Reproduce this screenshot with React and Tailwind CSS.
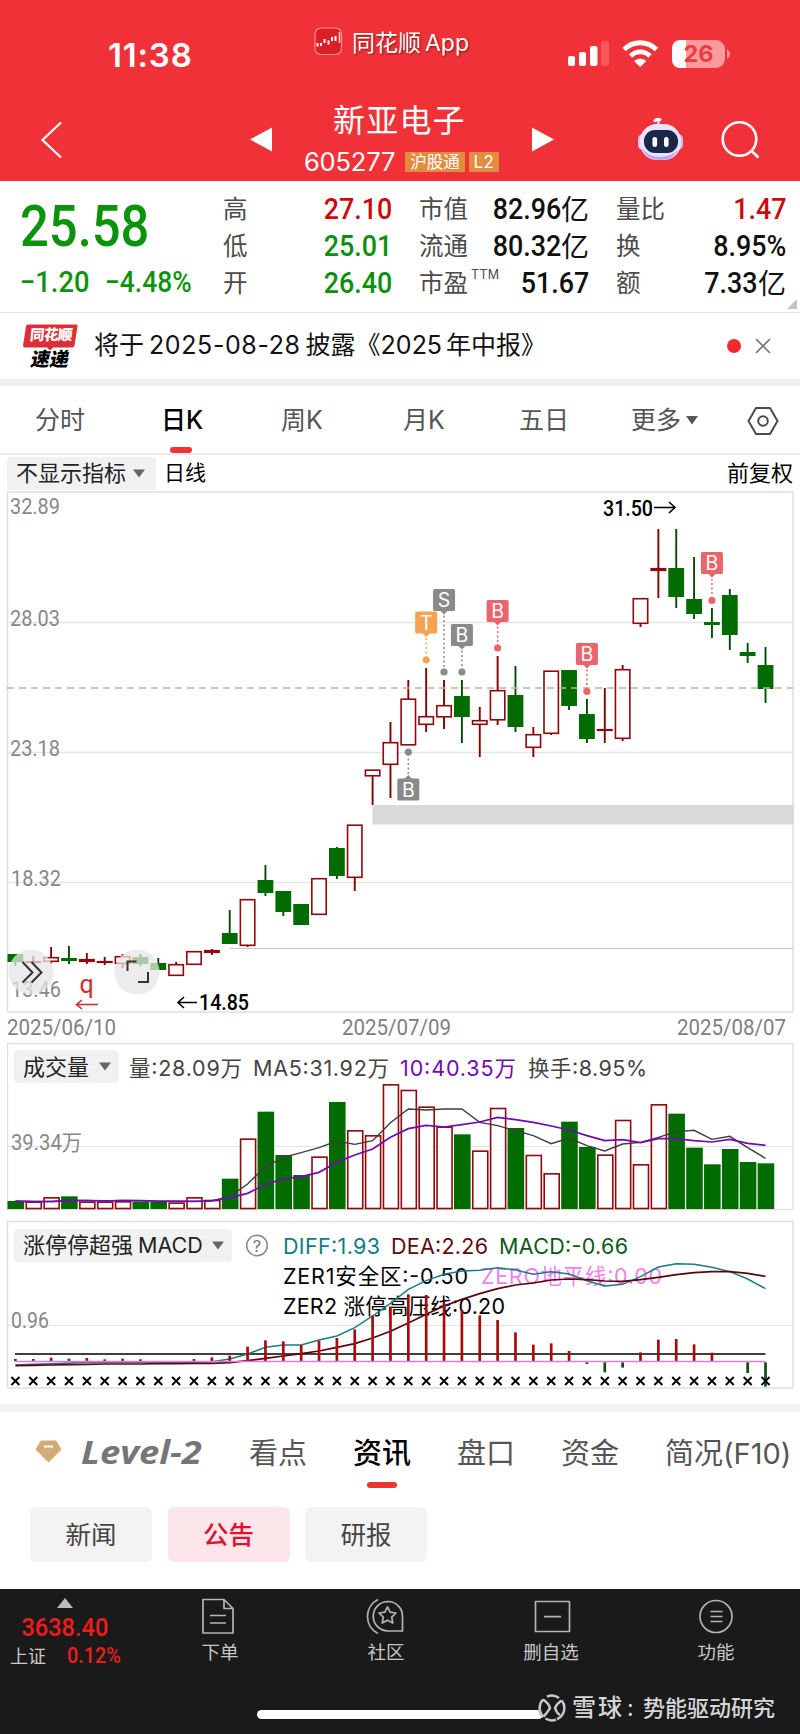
import React from 'react';

const GREEN = '#006c00';
const RED = '#93060b';
const STEP = 17.86;
const cx = (i) => 15.4 + i * STEP;

// [up, bodyTop, bodyBottom, high, low]
const candles = [
  [0, 954, 962, 954, 966], [1, 961, 963, 956, 964], [1, 957, 962, 947, 964], [0, 958, 961, 946, 964],
  [1, 959, 962, 953, 964], [1, 961, 963, 957, 965], [1, 956, 964, 954, 968], [0, 957, 964, 954, 966],
  [0, 963, 970, 958, 970], [1, 964, 976, 962, 976], [1, 951, 965, 951, 965], [1, 950, 953, 949, 955],
  [0, 933, 944, 910, 944], [1, 899, 946, 899, 947], [0, 880, 893, 865, 896], [0, 891, 912, 891, 916],
  [0, 904, 925, 904, 925], [1, 878, 915, 878, 915], [0, 848, 876, 847, 879], [1, 824.5, 878, 825, 891],
  [1, 769.5, 776.5, 770, 805], [1, 742, 765, 722, 798], [1, 698.5, 745.5, 680, 745], [1, 716, 725, 668, 732],
  [1, 705, 717.5, 680, 729], [0, 696, 717, 680, 743], [1, 720, 725, 707, 757], [1, 690, 720.5, 656, 725],
  [0, 695, 727, 666, 732], [1, 734, 748, 727, 757], [1, 670.5, 734, 671, 735], [0, 670, 706, 670, 710],
  [0, 714, 739, 699, 743], [1, 729, 731, 688, 743], [1, 669, 739, 665, 741], [1, 598, 624, 598, 627],
  [1, 568, 571, 529, 598], [0, 568, 597, 529, 608], [0, 599, 614, 557, 619], [0, 622, 625, 608, 638],
  [0, 595, 635, 589, 650], [0, 652, 656, 643, 663], [0, 665, 689, 647, 703],
];

const markers = [
  { i: 23, t: 'T', box: 611.5, dot: 660, c: '#f7a253' },
  { i: 24, t: 'S', box: 589, dot: 672, c: '#8a8a8a' },
  { i: 25, t: 'B', box: 624, dot: 672, c: '#8a8a8a' },
  { i: 27, t: 'B', box: 600, dot: 648, c: '#e9656b' },
  { i: 32, t: 'B', box: 643, dot: 691.5, c: '#e9656b' },
  { i: 39, t: 'B', box: 552, dot: 600.5, c: '#e9656b' },
  { i: 22, t: 'B', box: 778.5, dot: 752, c: '#8a8a8a' },
];

const volumes = [
  483, 485, 472, 469, 485, 485, 484, 485, 486, 488, 472, 480, 416, 296, 215, 345, 405, 350, 186, 271, 286, 133,
  150, 200, 260, 283, 332, 204, 264, 345, 400, 245, 321, 344, 240, 373, 193, 221, 323, 373, 327, 366, 370,
];
const ma5 = [
  483, 484, 484, 481, 481, 482, 482, 482, 484, 485, 484, 482, 470, 432, 380, 352, 338, 323, 303, 313, 302, 248,
  207, 210, 207, 207, 247, 257, 272, 287, 311, 294, 317, 333, 312, 307, 292, 275, 271, 298, 289, 323, 355,
];
const ma10 = [
  484, 485, 485, 482, 482, 483, 481, 482, 483, 483, 484, 483, 473, 460, 433, 417, 410, 397, 367, 345, 327, 292,
  266, 256, 261, 254, 246, 232, 239, 247, 258, 270, 287, 302, 299, 308, 296, 296, 302, 306, 298, 310, 316,
];
const diff = [
  975, 973, 971, 969, 967, 967, 967, 967, 967, 967, 967, 965, 957, 942, 922, 915, 915, 900, 888, 863, 828, 790,
  748, 722, 703, 693, 691, 683, 690, 703, 695, 702, 722, 738, 733, 710, 681, 671, 673, 682, 695, 717, 746,
];
const dea = [
  977, 976, 975, 974, 973, 972, 972, 972, 971, 971, 970, 970, 968, 962, 955, 948, 941, 933, 922, 911, 894, 874,
  849, 823, 798, 778, 761, 746, 735, 729, 720, 717, 719, 723, 724, 719, 712, 704, 698, 695, 695, 700, 709,
];
const macd = [
  957, 957, 953, 956, 954, 958, 956, 958, 964, 964, 957, 952, 947, 920, 901, 904, 915, 902, 894, 868, 827, 800,
  763, 765, 790, 810, 826, 840, 877, 914, 910, 933, 972, 997, 983, 937, 899, 897, 913, 938, 964, 999, 1040,
];

const toPoints = (list) => list.map((v, i) => `${cx(i)},${v / 3}`).join(' ');

const Label = ({ x, y, w, size = 21.5, fill = '#000', din, children }) => (
  <text
    x={x}
    y={y}
    textLength={w}
    lengthAdjust={din ? 'spacingAndGlyphs' : 'spacing'}
    fontSize={size}
    fill={fill}
    className={din ? "font-['Roboto','Noto_Sans_CJK_SC',sans-serif]" : undefined}
  >
    {children}
  </text>
);

const Pill = ({ className, children }) => (
  <div className={`flex items-center justify-between rounded bg-[#f1f1f1] text-[22px] leading-none text-[#222] ${className}`}>
    <span className="whitespace-nowrap">{children}</span>
    <svg width="12" height="9" viewBox="0 0 12 9"><path d="M0 0.5h12L6 8.5z" fill="#666" /></svg>
  </div>
);

const StatusBar = () => (
  <div className="relative flex h-[90px] text-white">
    <div className="w-[206px] pl-[108px] pt-[34px] font-['Inter'] text-[33px] font-semibold leading-[42px] tracking-[0.8px]">11:38</div>
    <div className="flex h-[56px] items-end pl-[108px]">
      <svg width="29" height="29" viewBox="0 0 29 29">
        <rect x="1" y="1" width="26.500" height="26.500" rx="6" fill="#dc2027" stroke="#fb8f90" strokeWidth="1.2" />
        <path d="M3.500 16v3.500M7 16v3M10.500 12v4M14.500 13.500v4M18 10v4M21.500 9v5" stroke="#fff" strokeWidth="2" />
        <path d="M25.500 5v11" stroke="#ffc9c9" strokeWidth="1.6" />
      </svg>
    </div>
    <div className="whitespace-nowrap pl-[9px] pt-[28px] text-[23px] leading-[30px] [text-shadow:1px_1px_2px_#7a1a1a]">同花顺<span className="ml-[4px] font-['Inter']">App</span></div>
    <svg className="absolute left-[566px] top-[38px]" width="168" height="32" viewBox="0 0 168 32">
      <rect x="2" y="18" width="7" height="10" rx="2" fill="#fff" />
      <rect x="13" y="14" width="7" height="14" rx="2" fill="#fff" />
      <rect x="24" y="8" width="7.500" height="20" rx="2" fill="#fff" />
      <rect x="35" y="3" width="8" height="25" rx="2" fill="#f5575a" />
      <g fill="none" stroke="#fff" strokeWidth="5">
        <path d="M58 11.500C67 2.500 81 2.500 90.500 11.500" />
        <path d="M64.500 18C70 12.500 78.500 12.500 84 18" strokeWidth="4.600" />
      </g>
      <path d="M68 23q6.200-5 12.400 0L74.200 29z" fill="#fff" />
      <rect x="106" y="2" width="53" height="28" rx="9" fill="#f99a9d" />
      <path d="M120 2h-5q-9 0-9 9v10q0 9 9 9h5z" fill="#fff" />
      <path d="M161 11q6 5 0 10z" fill="#f99a9d" />
      <text x="132.500" y="24" textAnchor="middle" fontSize="23.5" fontWeight="700" fill="#ef3a40" className="font-['Inter']">26</text>
    </svg>
  </div>
);

const NavBar = () => (
  <div className="relative flex h-[91px] text-white">
    <svg className="ml-[40px] mt-[31px]" width="23" height="38" viewBox="0 0 23 38"><path d="M21 1.500L2.500 19L21 36.500" fill="none" stroke="#fff" strokeWidth="2.200" /></svg>
    <svg className="ml-[187px] mt-[37px]" width="22" height="25" viewBox="0 0 22 25"><path d="M0 12.500L22 0.500v24z" fill="#fff" /></svg>
    <div className="ml-[30px] w-[200px] pt-[10px]">
      <h1 className="pl-[31px] text-[32px] leading-[42px] tracking-[1.2px]">新亚电子</h1>
      <div className="flex items-center pt-[9px] leading-[20px]">
        <span className="w-[98px] pl-[2px] pt-[1px] font-['Inter'] text-[25.5px] leading-[20px] tracking-[-0.2px]">605277</span>
        <span className="ml-[5px] flex h-[20px] w-[60px] items-center justify-center bg-[#e28c40] text-[16.5px]">沪股通</span>
        <span className="ml-[4px] flex h-[20px] w-[30px] items-center justify-center bg-[#e28c40] font-['Inter'] text-[17px] tracking-wide">L2</span>
      </div>
    </div>
    <svg className="ml-[30px] mt-[37px]" width="22" height="25" viewBox="0 0 22 25"><path d="M22 12.500L0 0.500v24z" fill="#fff" /></svg>
    <svg className="absolute left-[637px] top-[27px]" width="48" height="44" viewBox="0 0 48 44">
      <path d="M21 8q2-5-3-5" fill="none" stroke="#ddd5ff" strokeWidth="2.400" />
      <path d="M17 4.500q4-4 7-1" fill="none" stroke="#fff" strokeWidth="3" />
      <rect x="1" y="17" width="10" height="16" rx="5" fill="#d6ccfa" />
      <rect x="36" y="17" width="10" height="16" rx="5" fill="#c8bcf6" />
      <rect x="3" y="7" width="41" height="36" rx="17" fill="#e8e3ff" />
      <path d="M5 31q5 12 18 12t18-10q-7 7-18 7T5 31" fill="#b9a7f3" />
      <rect x="7" y="13" width="34" height="23" rx="11" fill="#1a2747" />
      <rect x="15.500" y="20" width="4.600" height="10" rx="2.200" fill="#fff" />
      <rect x="27" y="20" width="4.600" height="10" rx="2.200" fill="#fff" />
    </svg>
    <svg className="absolute left-[720px] top-[29px]" width="42" height="42" viewBox="0 0 42 42" fill="none" stroke="#fff" strokeWidth="2.600">
      <circle cx="19.500" cy="20" r="16.800" /><path d="M30.500 31l8 7.500" />
    </svg>
  </div>
);

const Stat = ({ label, sup, value, unit, className = 'text-[#111]' }) => (
  <div className="flex h-[37px] items-center justify-between">
    <span className="text-[24.5px] text-[#4c4c4c]">
      {label}
      {sup && <sup className="ml-[3px] -top-[13px] font-['Inter'] text-[12.5px] tracking-wide">{sup}</sup>}
    </span>
    <span className={`flex items-center whitespace-nowrap text-[28px] ${className}`}>
      <span className="origin-right scale-x-[0.91] font-['Roboto'] text-[29.5px] font-medium">{value}</span>
      {unit && <span className="leading-none">{unit}</span>}
    </span>
  </div>
);

const Quote = () => (
  <section className="relative flex h-[132px] border-b border-[#e3e3e3] bg-white pt-[10px]">
    <div className="w-[223px] pl-[20px] font-['Roboto'] text-[#0b940b]">
      <div className="origin-left scale-x-[0.89] pt-[7px] text-[57px] font-medium leading-[58px]">25.58</div>
      <div className="flex pt-[8px] text-[29px] leading-[36px] font-medium">
        <span className="w-[85px] origin-left scale-x-[0.94]">−1.20</span>
        <span className="origin-left scale-x-[0.91] whitespace-nowrap">−4.48%</span>
      </div>
    </div>
    <div className="w-[169px]">
      <Stat label="高" value="27.10" className="text-[#cc0a0a]" />
      <Stat label="低" value="25.01" className="text-[#0b900b]" />
      <Stat label="开" value="26.40" className="text-[#0b900b]" />
    </div>
    <div className="ml-[27px] w-[170px]">
      <Stat label="市值" value="82.96" unit="亿" />
      <Stat label="流通" value="80.32" unit="亿" />
      <Stat label="市盈" sup="TTM" value="51.67" />
    </div>
    <div className="ml-[27px] w-[170px]">
      <Stat label="量比" value="1.47" className="text-[#cc0a0a]" />
      <Stat label="换" value="8.95%" />
      <Stat label="额" value="7.33" unit="亿" />
    </div>
    <svg className="absolute bottom-[3px] right-[3px]" width="10" height="10"><path d="M10 0v10H0z" fill="#c4c4c4" /></svg>
  </section>
);

const NewsBanner = () => (
  <section className="flex h-[73px] items-center border-b-[7px] border-[#f0f0f0] bg-white">
    <div className="ml-[23px] w-[55px] text-center font-black leading-none">
      <div className="relative flex h-[24px] items-center justify-center">
        <svg className="absolute inset-0" width="55" height="26" viewBox="0 0 55 26"><path d="M5 0.500h48q2 0 1.500 2l-3 19q-.4 2-2 2H30l-3 3-3-3H2q-2 0-2-2L3 2.500q.4-2 2-2z" fill="#dd2f36" /></svg>
        <span className="relative -skew-x-6 text-[14.5px] tracking-[-0.5px] text-white">同花顺</span>
      </div>
      <div className="pt-[3px] text-[19px] leading-[18px] text-black"><span className="inline-block -skew-x-12">速递</span></div>
    </div>
    <p className="ml-[16px] flex-1 whitespace-nowrap text-[25px] text-[#111]">
      将于<span className="ml-[5px] mr-[5px] font-['Inter'] tracking-[0.6px]">2025-08-28</span>披露《<span className="mr-[4px] font-['Inter']">2025</span>年中报》
    </p>
    <span className="size-[14px] rounded-full bg-[#ef2a30]" />
    <svg className="ml-[14px] mr-[29px]" width="16" height="16" viewBox="0 0 16 16"><path d="M1 1l14 14M15 1L1 15" stroke="#777" strokeWidth="1.700" /></svg>
  </section>
);

const PeriodTabs = () => (
  <nav className="relative flex h-[69px] items-center border-b-2 border-[#ececec] bg-white pt-[2px] text-[25px] text-[#555] whitespace-nowrap">
    <span className="ml-[35px] w-[126px]">分时</span>
    <span className="w-[120px] font-medium text-black">日<span className="font-['Inter']">K</span></span>
    <span className="w-[122px]">周<span className="font-['Inter']">K</span></span>
    <span className="w-[116px]">月<span className="font-['Inter']">K</span></span>
    <span className="w-[112px]">五日</span>
    <span className="flex w-[116px] items-center gap-[5px]">更多<svg width="12" height="9" viewBox="0 0 12 9"><path d="M0 0h12L6 8.500z" fill="#555" /></svg></span>
    <svg width="32" height="30" viewBox="0 0 32 30" fill="none" stroke="#4a4a4a" strokeWidth="2">
      <path d="M9 2h14l7.500 13L23 28H9L1.500 15z" strokeLinejoin="round" /><circle cx="16" cy="15" r="4.800" />
    </svg>
    <span className="absolute left-[170px] bottom-[0px] h-[6px] w-[22px] rounded-full bg-[#ee3434]" />
  </nav>
);

const KChart = () => (
  <section className="bg-white">
    <div className="flex h-[36px] items-center pl-[7px] pr-[7px] text-[22px] text-black">
      <Pill className="h-[33px] w-[149px] pl-[9px] pr-[11px]">不显示指标</Pill>
      <span className="ml-[8px] text-[21px]">日线</span>
      <span className="ml-auto">前复权</span>
    </div>
    <svg className="block" width="800" height="552" viewBox="0 491 800 552">
      <rect x="7.500" y="492" width="785.500" height="520" fill="none" stroke="#dedede" strokeWidth="1.500" />
      <path d="M7 622.500H793M7 752.500H793M7 882.500H793" stroke="#e6e6e6" strokeWidth="1.300" />
      <path d="M230 948.500H793" stroke="#c9c9c9" strokeWidth="1.200" />
      <rect x="372.500" y="805" width="421" height="19.500" fill="#d9d9d9" />
      <g fill="#888">
        <Label x="10" y="514" w="50" size="22" fill="#888" din>32.89</Label>
        <Label x="10" y="625.5" w="50" size="22" fill="#888" din>28.03</Label>
        <Label x="10" y="755.5" w="50" size="22" fill="#888" din>23.18</Label>
        <Label x="11" y="885.5" w="50" size="22" fill="#888" din>18.32</Label>
        <Label x="11" y="997" w="50" size="22" fill="#888" din>13.46</Label>
      </g>
      {candles.map(([up, top, bottom, high, low], i) => (
        <g key={i}>
          <path d={`M${cx(i)} ${high}V${low}`} stroke={up ? '#850000' : '#004d00'} strokeWidth="1.900" />
          {up ? (
            <rect x={cx(i) - 7.200} y={top + 0.7} width="14.400" height={Math.max(bottom - top - 1.4, 0.6)} fill="#fff" stroke={RED} strokeWidth="1.600" />
          ) : (
            <rect x={cx(i) - 7.900} y={top} width="15.800" height={bottom - top} fill={GREEN} />
          )}
        </g>
      ))}
      <path d="M7 688H793" stroke="#b3bb9c" strokeWidth="1.300" strokeDasharray="7 5" />
      {markers.map(({ i, t, box, dot, c }) => (
        <g key={i} fill={c}>
          <path d={`M${cx(i)} ${dot > box ? box + 22 : box}V${dot}`} stroke={c} strokeWidth="1.500" strokeDasharray="2 2.500" />
          <circle cx={cx(i)} cy={dot} r="3.600" />
          <rect x={cx(i) - 11} y={box} width="22" height="22" rx="1.500" />
          <path d={dot > box ? `M${cx(i) - 4} ${box + 21.5}h8l-4 4z` : `M${cx(i) - 4} ${box + 0.5}h8l-4 -4z`} />
          <text x={cx(i)} y={box + 18} textAnchor="middle" fontSize="19.500" fill="#fff" className="font-['Inter']">{t}</text>
        </g>
      ))}
      <Label x="603" y="515.500" w="50" size="22" din><tspan fontWeight="500">31.50</tspan></Label>
      <path d="M654 507.500H675M669 502l6 5.500-6 5.500" fill="none" stroke="#000" strokeWidth="1.600" />
      <Label x="199" y="1010" w="50" size="22" din><tspan fontWeight="500">14.85</tspan></Label>
      <path d="M197 1002.500H178M184 997l-6 5.500 6 5.500" fill="none" stroke="#000" strokeWidth="1.600" />
      <g fillOpacity="0.75" fill="#e6e6e6"><circle cx="31" cy="972" r="22.500" /><circle cx="137" cy="972" r="22.500" /></g>
      <path d="M22.500 962l10 10.500-10 10M31.500 962l10 10.500-10 10" fill="none" stroke="#333" strokeWidth="2" />
      <path d="M127.500 971v-9.500h9M138 982h10v-10" fill="none" stroke="#333" strokeWidth="2" />
      <text x="79.500" y="992.500" fontSize="25" fill="#d42a2f" className="font-['Roboto']">q</text>
      <path d="M98 1004.500H77M82 1000l-5.500 4.500 5.500 4.500" fill="none" stroke="#d42a2f" strokeWidth="1.600" />
      <Label x="7" y="1034.500" w="109" size="22" fill="#808080" din>2025/06/10</Label>
      <Label x="342" y="1034.500" w="109" size="22" fill="#808080" din>2025/07/09</Label>
      <Label x="677" y="1034.500" w="109" size="22" fill="#808080" din>2025/08/07</Label>
    </svg>
  </section>
);

const VolumeChart = () => (
  <section className="relative bg-white">
    <svg className="block" width="800" height="172" viewBox="0 3 800 172">
      <rect x="7.500" y="3.500" width="785.500" height="166" fill="none" stroke="#dedede" strokeWidth="1.300" />
      <path d="M7 106.500H793" stroke="#e3e3e3" strokeWidth="1.200" />
      {volumes.map((v, i) => candles[i][0] ? (
        <rect key={i} x={cx(i) + 0.4 - 7.400} y={v / 3 + 0.5} width="15" height={168.5 - v / 3 - 0.5} fill="#fff" fillOpacity="0.7" stroke={RED} strokeWidth="1.600" />
      ) : (
        <rect key={i} x={cx(i) - 7.900} y={v / 3} width="16.600" height={169 - v / 3} fill={GREEN} />
      ))}
      <polyline points={toPoints(ma5)} fill="none" stroke="#3d3d3d" strokeWidth="1.400" />
      <polyline points={toPoints(ma10)} fill="none" stroke="#7209b8" strokeWidth="1.700" />
      <Label x="11" y="110" w="71" size="22" fill="#888" din>39.34万</Label>
      <Label x="129" y="35.5" w="113" fill="#444">量:28.09万</Label>
      <Label x="253" y="35.5" w="136" fill="#444">MA5:31.92万</Label>
      <Label x="400" y="35.5" w="116" fill="#7209b8">10:40.35万</Label>
      <Label x="528" y="35.5" w="119" fill="#444">换手:8.95%</Label>
    </svg>
    <Pill className="absolute left-[14px] top-[7px] h-[33px] w-[105px] pl-[9px] pr-[8px]">成交量</Pill>
  </section>
);

const MacdChart = () => (
  <section className="relative bg-white">
    <svg className="block" width="800" height="189" viewBox="0 175 800 189">
      <rect x="7.500" y="181.500" width="785.500" height="166.500" fill="none" stroke="#dedede" strokeWidth="1.500" />
      <path d="M7 285.500H793" stroke="#e3e3e3" strokeWidth="1.200" />
      <path d="M15 314H765.500" stroke="#000" strokeWidth="1.700" />
      <Label x="11" y="288" w="38" size="22" fill="#888" din>0.96</Label>
      <Label x="283" y="213.5" w="97" fill="#0d7d85">DIFF:1.93</Label>
      <Label x="391" y="213.5" w="97" fill="#5e0a10">DEA:2.26</Label>
      <Label x="499" y="213.5" w="129" fill="#0a5a14">MACD:-0.66</Label>
      <Label x="283" y="244" w="185">ZER1安全区:-0.50</Label>
      <Label x="481" y="244" w="181" fill="#ee82ee">ZERO地平线:0.00</Label>
      <Label x="283" y="274" w="222">ZER2 涨停高压线:0.20</Label>
      <polyline points={toPoints(diff)} fill="none" stroke="#197c85" strokeWidth="1.500" />
      <polyline points={toPoints(dea)} fill="none" stroke="#5a0508" strokeWidth="1.700" />
      {macd.map((v, i) => v !== 964 && (
        <path key={i} d={`M${cx(i)} ${v > 964 ? 322.3 : 321}V${v / 3}`} stroke={v > 964 ? '#0b4f12' : '#a80a0e'} strokeWidth="2.700" />
      ))}
      <path d="M15 321.500H765.500" stroke="#dd7cd9" strokeWidth="1.700" />
      {macd.map((v, i) => (
        <path key={i} d={`M${cx(i) - 4} ${337}l8 8M${cx(i) + 4} ${337}l-8 8`} stroke="#000" strokeWidth="1.900" />
      ))}
      <circle cx="257" cy="205.500" r="10.300" fill="none" stroke="#888" strokeWidth="1.500" />
      <text x="257" y="211.500" textAnchor="middle" fontSize="16.500" fill="#777" className="font-['Inter']">?</text>
    </svg>
    <Pill className="absolute left-[14px] top-[14px] h-[33px] w-[218px] pl-[9px] pr-[8px]">涨停停超强<span className="ml-[5px] font-['Inter'] text-[21.5px]">MACD</span></Pill>
  </section>
);

const InfoTabs = () => (
  <section className="relative h-[185px] border-t-[8px] border-[#f2f2f2] bg-white">
    <nav className="flex h-[81px] items-center whitespace-nowrap pt-[2px] text-[29px] text-[#555]">
      <svg className="ml-[35px] mt-[-4px]" width="27" height="23" viewBox="0 0 27 23"><path d="M6 1h15l5 8.500L13.500 22 1 9.500z" fill="#d3ab74" stroke="#d3ab74" strokeLinejoin="round" /><path d="M9 6.500h9" stroke="#fff" strokeWidth="2" /></svg>
      <span className="ml-[19px] w-[168px]"><span className="inline-block origin-left scale-x-[1.14] font-['Open_Sans'] text-[32px] font-bold italic leading-none text-[#767676]">Level-2</span></span>
      <span className="w-[104px]">看点</span>
      <span className="w-[104px] font-medium text-black">资讯</span>
      <span className="w-[104px]">盘口</span>
      <span className="w-[104px]">资金</span>
      <span>简况<span className="font-['Inter'] text-[29px]">(F10)</span></span>
    </nav>
    <span className="absolute left-[367px] top-[70px] h-[6px] w-[30px] rounded-full bg-[#e93632]" />
    <div className="flex gap-[15.5px] pl-[30px] pt-[14px] text-[25.500px]">
      <button className="h-[55px] w-[122px] rounded-md bg-[#f3f3f3] pt-[2px] text-[#444]">新闻</button>
      <button className="h-[55px] w-[122px] rounded-md bg-[#fde6ea] pt-[2px] font-medium text-[#dc1430]">公告</button>
      <button className="h-[55px] w-[122px] rounded-md bg-[#f3f3f3] pt-[2px] text-[#444]">研报</button>
    </div>
  </section>
);

const FootItem = ({ className, label, children }) => (
  <div className={`flex flex-col items-center pt-[8px] ${className}`}>
    <svg width="40" height="38" viewBox="0 0 40 38" fill="none" stroke="#b4b4b4" strokeWidth="1.700" strokeLinejoin="round">{children}</svg>
    <span className="pt-[5px] text-[18.500px] leading-[24px] text-[#c8c8c8]">{label}</span>
  </div>
);

const Footer = () => (
  <footer className="relative h-[145px] bg-[#1a1a1a]">
    <div className="flex h-[90px]">
      <div className="flex w-[130px] flex-col items-center pt-[9px] font-['Roboto'] text-[#f01c1c]">
        <svg width="16" height="10"><path d="M8 0l8 10H0z" fill="#bbb" /></svg>
        <span className="scale-x-[0.89] pt-[3px] text-[26.5px] font-medium leading-[31px]">3638.40</span>
        <div className="flex w-full justify-between pl-[10px] pr-[9px] text-[22px] leading-[27px]">
          <span className="font-['Noto_Sans_CJK_SC'] text-[18px] text-[#c8c8c8]">上证</span>
          <span className="origin-right scale-x-[0.9] font-medium">0.12%</span>
        </div>
      </div>
      <FootItem className="ml-[30px] w-[120px]" label="下单">
        <path d="M4 2.500h20l9 9v24.500H3V2.500zM24 2.500v9H33M10 18.500h16M10 26h16" />
      </FootItem>
      <FootItem className="ml-[46px] w-[120px]" label="社区">
        <path d="M22 4.500a14.700 14.700 0 1 0 0 29.500H36.500V19.200A14.700 14.700 0 0 0 22 4.500zM12 2.500A19 19 0 0 0 12 36.500" />
        <path d="M21.500 9.800L24.100 15.200L30 16L25.700 20.100L26.800 26L21.500 23.200L16.200 26L17.300 20.100L13 16L18.900 15.200z" />
      </FootItem>
      <FootItem className="ml-[45px] w-[120px]" label="删自选">
        <path d="M4.500 4.500h34v30h-34zM13 19.700h17" />
      </FootItem>
      <FootItem className="ml-[45px] w-[120px]" label="功能">
        <circle cx="20" cy="19.500" r="16" /><path d="M14.500 14.500h12M14.500 19.500h12M14.500 24.500h12" />
      </FootItem>
    </div>
    <span className="absolute left-[257px] top-[121px] h-[9px] w-[286px] rounded-full bg-white" />
    <div className="absolute left-[538px] top-[102px] flex items-center text-[22px] font-medium leading-[34px] whitespace-nowrap text-[#d6d6d6]">
      <svg width="28" height="28" viewBox="0 0 28 28" fill="none" stroke="#c9c9c9" strokeWidth="2.500">
        <circle cx="14" cy="14" r="13.500" fill="#1a1a1a" stroke="none" />
        <path d="M9 2.700A12.300 12.300 0 0 1 21 3.900M23.800 6.500A12.300 12.300 0 0 1 19 25.200M18 25.700A12.300 12.300 0 0 1 7.500 24.500M5.500 22.900A12.300 12.300 0 0 1 5 5.500" />
        <path d="M5 5.500Q10.500 9 12 14Q10.500 17 5.500 22.700M23.500 6.500Q18.500 10 17 14Q18.500 19 22 21" />
      </svg>
      <span className="ml-[6px] text-[24px] tracking-[2px]">雪球</span>
      <span className="ml-[3px] w-[16px]">:</span>
      <span>势能驱动研究</span>
    </div>
  </footer>
);

export default function App() {
  return (
    <main className="w-[800px] overflow-hidden bg-white font-['Inter','Noto_Sans_CJK_SC',sans-serif]">
      <header className="bg-[#f13138]"><StatusBar /><NavBar /></header>
      <Quote />
      <NewsBanner />
      <PeriodTabs />
      <KChart />
      <VolumeChart />
      <MacdChart />
      <InfoTabs />
      <Footer />
    </main>
  );
}
